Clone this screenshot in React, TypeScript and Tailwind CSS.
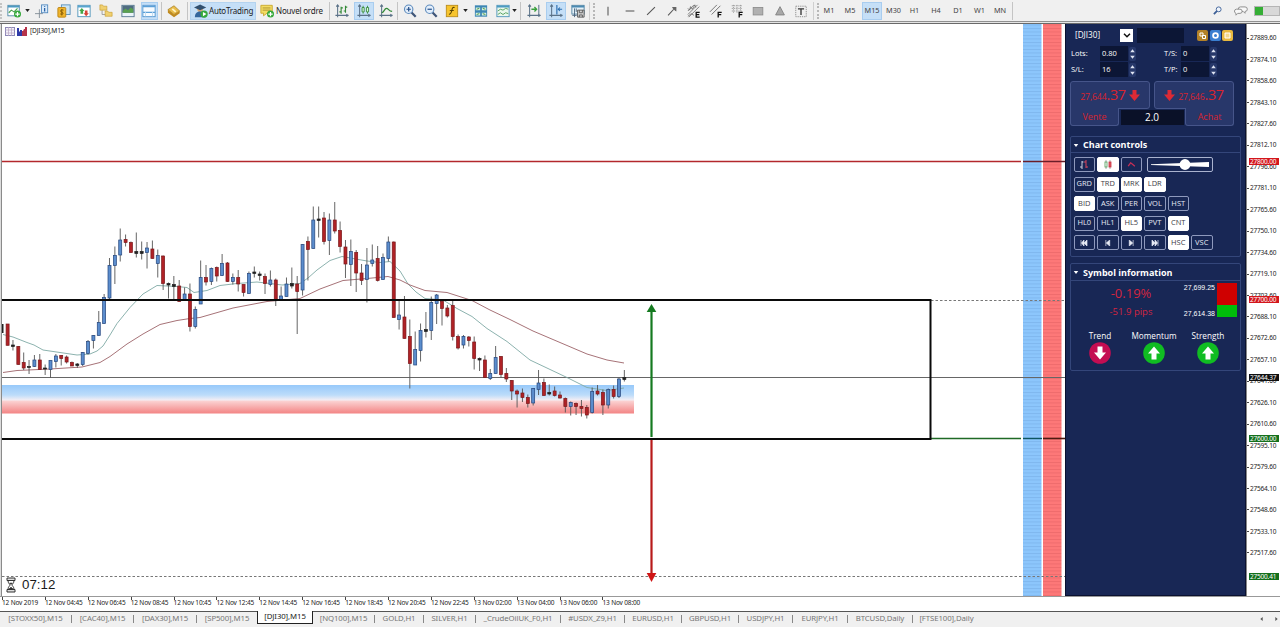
import type { ReactNode } from "react";
import clsx from "clsx";

type Kind = "b" | "r" | "d";
// high, body top, body bottom, low
type Candle = [Kind, number, number, number, number];

const candles: Candle[] = [
  ["r", 324, 324, 345.3, 345.3], ["d", 340, 345, 346.5, 350.5], ["r", 346, 346.5, 364.5, 364.5], ["r", 352.5, 362.5, 368, 370],
  ["d", 360, 366.5, 367.5, 374], ["b", 355, 360, 366.5, 367], ["r", 354, 360, 369.5, 369.5], ["d", 364.5, 368, 369, 375],
  ["b", 360.5, 360.5, 369.5, 378], ["b", 354, 356, 361.5, 367.5], ["r", 355, 355.5, 358.5, 365.5], ["r", 355.5, 357, 362, 363.5],
  ["r", 361.5, 362.5, 366, 366], ["d", 363, 364, 365.5, 368], ["b", 352, 352.5, 364.5, 366], ["b", 340, 341.5, 353.5, 354.5],
  ["b", 335, 335.5, 340.5, 348.5], ["b", 311, 322.5, 335.5, 335.5], ["b", 294, 297.5, 323.5, 323.5], ["b", 258, 265.5, 298, 299],
  ["b", 246.5, 255.5, 265.5, 284], ["b", 228.5, 240, 255, 261.5], ["r", 234.5, 239.5, 242.5, 246.5], ["r", 241.5, 242.5, 252.5, 252.5],
  ["d", 232.5, 251.5, 253.5, 257.5], ["d", 241.5, 251.5, 253.5, 259.5], ["b", 242, 248, 252.5, 268.5], ["r", 240.5, 249, 258.5, 258.5],
  ["b", 249.5, 255.5, 263.5, 277.5], ["r", 255.5, 256, 283.5, 290], ["d", 282.5, 283.5, 285, 298.5], ["d", 276, 284.5, 286.5, 300],
  ["r", 280, 286, 301.5, 301.5], ["b", 287.5, 294, 300.5, 300.5], ["r", 283.5, 294, 326.5, 331.5], ["b", 306.5, 309.5, 326.5, 328.5],
  ["b", 260.5, 277.5, 304, 304], ["r", 265, 277.5, 282, 285.5], ["b", 267.5, 268.5, 281.5, 285], ["r", 266.5, 267.5, 276, 281.5],
  ["b", 254, 263.5, 275.5, 276], ["r", 262, 263, 281.5, 282], ["b", 273.5, 277.5, 281.5, 284.5], ["r", 270, 277.5, 284, 291.5],
  ["r", 284.5, 284.5, 292.5, 296.5], ["b", 271.5, 273.5, 293.5, 293.5], ["d", 266.5, 272, 273.5, 277.5], ["d", 271.5, 274, 275.5, 280.5],
  ["r", 273.5, 276.5, 283.5, 294], ["b", 270.5, 280, 284.5, 286.5], ["r", 278.5, 280, 300.5, 306], ["b", 286.5, 296, 299.5, 300.5],
  ["b", 277.5, 284, 296.5, 296.5], ["d", 267.5, 283.5, 286, 288.5], ["r", 276, 284, 291.5, 334], ["b", 244, 244.5, 290, 295.5],
  ["r", 236.5, 241.5, 249.5, 280.5], ["b", 206.5, 220, 248.5, 248.5], ["d", 206.5, 219, 220.5, 237.5], ["r", 212, 218, 241.5, 244.5],
  ["b", 213.5, 220, 240.5, 255], ["r", 202, 220, 231, 233.5], ["r", 221.5, 230.5, 246.5, 252.5], ["r", 240, 247, 264, 278],
  ["b", 239.5, 251.5, 264.5, 286], ["r", 250, 252.5, 273, 292], ["r", 264, 273, 280.5, 285], ["b", 248, 265, 279.5, 302.5],
  ["b", 244.5, 260, 263.5, 266.5], ["r", 246, 258.5, 280.5, 281.5], ["b", 253.5, 257.5, 279.5, 279.5], ["b", 236.5, 242, 258.5, 261.5],
  ["r", 241.5, 242, 317.5, 317.5], ["b", 300.5, 315, 319.5, 329.5], ["r", 296, 317, 338.5, 338.5], ["r", 319.5, 336.5, 363.5, 388.5],
  ["b", 331.5, 349.5, 365, 365], ["b", 323.5, 330.5, 350.5, 361.5], ["d", 312, 329.5, 331.5, 337.5], ["b", 296.5, 302.5, 330.5, 340],
  ["b", 294, 295, 303.5, 324], ["r", 300, 301.5, 308.5, 325.5], ["r", 305, 308, 316, 317.5], ["r", 300, 305.5, 336.5, 340.5],
  ["r", 334.5, 336.5, 348, 349.5], ["b", 335, 336.5, 345, 348.5], ["r", 336, 337, 340.5, 346.5], ["r", 336.5, 342, 358.5, 369.5],
  ["d", 357.5, 358.5, 360, 371], ["r", 355.5, 360, 377.5, 378], ["b", 369, 373.5, 378.5, 380], ["b", 346, 357.5, 373.5, 373.5],
  ["r", 356, 356.5, 374.5, 377.5], ["r", 368, 373.5, 379, 382], ["r", 380, 380.5, 391, 400], ["r", 389.5, 391, 394, 407.5],
  ["r", 388.5, 393, 397.5, 402], ["r", 394.5, 397.5, 403.5, 407.5], ["b", 388, 388.5, 403, 405.5], ["b", 370, 383, 389.5, 395],
  ["r", 378.5, 382.5, 395.5, 395.5], ["d", 384.5, 392.5, 394, 395.5], ["r", 386.5, 391, 395.5, 396.5], ["r", 391.5, 395, 398, 398.5],
  ["r", 397.5, 398.5, 406.5, 412.5], ["b", 401.5, 402.5, 406.5, 415.5], ["r", 402.5, 403.5, 406.5, 415], ["r", 400, 406.5, 408.5, 416.5],
  ["r", 405, 407.5, 415, 418.5], ["b", 387.5, 391.5, 412.5, 413.5], ["r", 385, 391, 394, 395.5], ["r", 389.5, 392.5, 405, 415],
  ["b", 388.5, 389.5, 405, 408.5], ["r", 385.5, 389.5, 396.5, 398.5], ["b", 377.5, 379, 396.5, 398], ["d", 370, 377.5, 379.5, 381.5],
];

const fills: Record<Kind, string> = { b: "#5b8dcd", r: "#b02226", d: "#222" };
const strokes: Record<Kind, string> = { b: "#24457c", r: "#7a171b", d: "#222" };

const fastMa =
  "3,334.5 13,337 27,342.5 34,345 43,350 60,352.5 77,355 90,354 97,351 103,346 110,335 117,323.5 130,307.5 143,294 157,285.5 177,286.5 187,287.5 194,292.5 207,290.5 220,285.5 237,283.5 257,282 270,283.5 282,285 300,283.5 308,278 317,270 330,260.5 342,256.5 353,258.5 367,261 380,262.5 390,261.5 400,271 408,284 416,292 425,298.5 443,300 457,308.5 472,316.5 487,328.5 507,341.5 530,360 567,377.5 587,387.5 607,390.5 624,388";
const slowMa =
  "3,372.5 17,370.5 50,369 82,367 100,362.5 110,356.5 127,344 143,334 160,324.5 177,320.5 190,318.5 200,317.5 233,308 267,301.5 300,298.5 320,289 343,280.5 367,278.5 388,276.5 400,280 410,285 425,290.5 447,292.5 472,300.5 490,310 510,319.5 533,331 560,342.5 587,354 607,360 624,363";

const times = [
  "12 Nov 2019", "12 Nov 04:45", "12 Nov 06:45", "12 Nov 08:45", "12 Nov 10:45", "12 Nov 12:45", "12 Nov 14:45", "12 Nov 16:45",
  "12 Nov 18:45", "12 Nov 20:45", "12 Nov 22:45", "13 Nov 02:00", "13 Nov 04:00", "13 Nov 06:00", "13 Nov 08:00",
];

const prices = Array.from({ length: 25 }, (_, i) => (27889.6 - i * 15.5).toFixed(2));

const tabs = [
  { name: "[STOXX50],M15", w: "w-[72px]" },
  { name: "[CAC40],M15", w: "w-[62px]" },
  { name: "[DAX30],M15", w: "w-[63px]" },
  { name: "[SP500],M15", w: "w-[60px]", plain: true },
  { name: "[DJI30],M15", w: "w-[56px]", active: true },
  { name: "[NQ100],M15", w: "w-[62px]" },
  { name: "GOLD,H1", w: "w-[49px]" },
  { name: "SILVER,H1", w: "w-[52px]" },
  { name: "_CrudeOilUK_F0,H1", w: "w-[85px]" },
  { name: "#USDX_Z9,H1", w: "w-[64px]" },
  { name: "EURUSD,H1", w: "w-[57px]" },
  { name: "GBPUSD,H1", w: "w-[57px]" },
  { name: "USDJPY,H1", w: "w-[54px]" },
  { name: "EURJPY,H1", w: "w-[55px]" },
  { name: "BTCUSD,Daily", w: "w-[65px]" },
  { name: "[FTSE100],Daily", w: "w-[67px]", plain: true },
];

function Cell({ w, on, children }: { w: string; on?: string; children?: ReactNode }) {
  return (
    <div className={clsx("flex h-full shrink-0 items-center justify-center", w)}>
      {on ? <div className={clsx("flex h-[18px] items-center justify-center border border-[#a9cdef] bg-[#c5dff7]", on)}>{children}</div> : children}
    </div>
  );
}

function Icon({ children }: { children: ReactNode }) {
  return (
    <svg viewBox="0 0 16 16" className="size-[14px] shrink-0" fill="none">
      {children}
    </svg>
  );
}

const Caret = () => (
  <svg viewBox="0 0 6 4" className="h-[3px] w-[5px]"><path d="M0 0h6L3 4z" fill="#222" /></svg>
);
const Sep = ({ w }: { w: string }) => (
  <Cell w={w}><div className="h-[18px] w-px bg-[#c4c4c4]" /></Cell>
);
const Grip = ({ w }: { w: string }) => (
  <Cell w={w}>
    <div className="flex gap-[3px]">
      <div className="h-[18px] w-px bg-[#cfcfcf]" />
      <div className="h-[16px] self-center border-l-2 border-dotted border-[#b8b8b8]" />
    </div>
  </Cell>
);
const Axes = () => <path d="M3 1v14M0.500 13h15M13 11.500l2 1.500-2 1.500M1.500 3L3 1l1.500 2" stroke="#5b7288" strokeWidth="1.200" />;
const Plus = () => (
  <g>
    <circle cx="12" cy="11.500" r="4" fill="#35a83a" />
    <path d="M12 9v5M9.500 11.500h5" stroke="#fff" strokeWidth="1.400" />
  </g>
);

function Magnifier({ minus }: { minus?: boolean }) {
  return (
    <Icon>
      <path d="M9.500 9.500l5 5" stroke="#3f5577" strokeWidth="2.600" />
      <circle cx="6.500" cy="6" r="4.800" fill="#e4effb" stroke="#5d8bbd" strokeWidth="1.300" />
      <path d={minus ? "M4 6h5" : "M4 6h5M6.500 3.500v5"} stroke="#27518c" strokeWidth="1.400" />
    </Icon>
  );
}

function Toolbar() {
  return (
    <div className="flex h-[21px] items-center bg-[#f0f0f0] font-['Noto_Sans',sans-serif] text-[#222]">
      <div className="h-[16px] w-[3px] border-l-2 border-dotted border-[#c4c4c4]" />
      <Cell w="w-[21px]">
        <Icon>
          <rect x="1" y="1.500" width="13" height="12" fill="#fff" stroke="#4b86a8" />
          <path d="M1 3h13" stroke="#4b9ac2" strokeWidth="2" />
          <path d="M2 10l3-3 3 2 4-4" stroke="#48a04b" strokeWidth="1.300" />
          <Plus />
        </Icon>
      </Cell>
      <Cell w="w-[6px]"><Caret /></Cell>
      <Cell w="w-[24px]">
        <Icon>
          <path d="M0 11h9M5 6v10" stroke="#7e8994" />
          <rect x="7.500" y="1" width="7" height="9" fill="#dcecfb" stroke="#4d86bd" />
          <path d="M11 4.500v4M11 2.500v1" stroke="#2b62a5" strokeWidth="1.500" />
        </Icon>
      </Cell>
      <Cell w="w-[19px]">
        <Icon>
          <rect x="5" y="1" width="10" height="11" fill="#cbe4f5" stroke="#538db5" />
          <rect x="1" y="4" width="9" height="11" rx="1" fill="#f0b52c" stroke="#b8800f" />
          <path d="M7.500 7c-4-1.500-4 2-2 2.400s2.500 3-1.800 2M5.500 5.800v7.400" stroke="#7b5200" />
        </Icon>
      </Cell>
      <Cell w="w-[22px]">
        <Icon>
          <rect x="1" y="1.500" width="14" height="13" fill="#fff" stroke="#4a91b9" />
          <path d="M1 3h14" stroke="#58a6d0" strokeWidth="2" />
          <path d="M5.500 4.500l3 3.500H7v3H4V8H2.500z" fill="#43a646" />
          <path d="M10.500 14L7.500 10.500H9v-3h3v3h1.500z" fill="#d64537" />
        </Icon>
      </Cell>
      <Cell w="w-[22px]">
        <Icon>
          <path d="M3.500 5v7H9" stroke="#999" />
          <path d="M1 1h3l1 1.500h4V7H1zM7 8h3l1 1.500h4V14H7z" fill="#f0d070" stroke="#c79a29" strokeWidth=".7" />
        </Icon>
      </Cell>
      <Cell w="w-[21px]">
        <Icon>
          <rect x="1" y="1.500" width="14" height="13" fill="#eaf3f9" stroke="#53758f" />
          <path d="M1.500 2h13v8h-13z" fill="#4f6c80" />
          <path d="M2 8l3-3 3 2 3-3 3 2v4H2z" fill="#5aa04f" />
        </Icon>
      </Cell>
      <Cell w="w-[22px]" on="w-[17px]">
        <Icon>
          <rect x="1" y="1.500" width="14" height="13" fill="#f7fbff" stroke="#4f93cd" />
          <path d="M1 3h14M1 9.500h14" stroke="#5ba0d8" strokeWidth="1.300" />
          <path d="M4 9v5M12 9v5" stroke="#bcd9f0" />
        </Icon>
      </Cell>
      <Sep w="w-[3px]" />
      <Cell w="w-[22px]">
        <Icon>
          <path d="M1 6.500L8 2l6.500 6L8 12z" fill="#e9bd4a" stroke="#a4781b" strokeWidth=".8" />
          <path d="M1 6.500V10l7 5 6.500-4.500V8L8 12z" fill="#c08a1d" />
          <path d="M6 5.500l4 3.500" stroke="#fff3c5" strokeWidth="2" />
        </Icon>
      </Cell>
      <Sep w="w-[5px]" />
      <div className="flex h-[18px] w-[66px] shrink-0 items-center gap-px border border-[#b4d3ef] bg-[#c5dff7] pl-[3px]">
        <Icon>
          <circle cx="7" cy="6" r="3.200" fill="#d9a874" />
          <path d="M0 4l7-3.500L14 4 7 7z" fill="#31506f" />
          <path d="M1 15c0-5 3-6.500 6-6.500s6 1.500 6 6.500z" fill="#35679d" />
          <circle cx="11.500" cy="11.500" r="4.200" fill="#36a83b" />
          <path d="M10.200 9l4 2.500-4 2.500z" fill="#fff" />
        </Icon>
        <span className="text-[8px] tracking-[-0.2px] whitespace-nowrap">AutoTrading</span>
      </div>
      <div className="flex w-[69px] shrink-0 items-center gap-[2px] pl-[4px]">
        <Icon>
          <path d="M1 1.500h13v9H8l-4 3v-3H1z" fill="#f3dc62" stroke="#c7a62b" />
          <path d="M3 4.500h9M3 7h9" stroke="#a78d2a" />
          <Plus />
        </Icon>
        <span className="text-[8px] tracking-[-0.2px] whitespace-nowrap">Nouvel ordre</span>
      </div>
      <Sep w="w-[8px]" />
      <Cell w="w-[18px]">
        <Icon><Axes /><path d="M7 3v8M5 9h2M7 4.500h2M12 2v8M10 8h2M12 3.500h2" stroke="#338a38" strokeWidth="1.300" /></Icon>
      </Cell>
      <Cell w="w-[26px]" on="w-[20px]">
        <Icon><Axes /><path d="M7 2v9M12 2v9" stroke="#338a38" /><path d="M5.800 4h2.400v5H5.800zM10.800 4h2.400v5h-2.400z" fill="#dff5da" stroke="#338a38" /></Icon>
      </Cell>
      <Cell w="w-[17px]">
        <Icon><Axes /><path d="M3 10c3 0 3-5 5.500-5S11 8 15 8.500" stroke="#338a38" strokeWidth="1.400" /></Icon>
      </Cell>
      <Sep w="w-[6px]" />
      <Cell w="w-[20px]"><Magnifier /></Cell>
      <Cell w="w-[22px]"><Magnifier minus /></Cell>
      <Cell w="w-[20px]">
        <Icon>
          <rect x="1.500" y="1.500" width="13" height="13" fill="#f7c42d" stroke="#b88a1a" />
          <path d="M11 4c-2-.5-2.500 0-3 2.500S7 12 4.500 11.800M5.500 7.500h4.500" stroke="#5a4300" strokeWidth="1.200" />
        </Icon>
      </Cell>
      <Cell w="w-[6px]"><Caret /></Cell>
      <Cell w="w-[26px]">
        <Icon>
          <rect x="1" y="1.500" width="14" height="13" fill="#3c86b4" />
          <path d="M2 4h5v3H2zM9 4h5v3H9zM2 10h5v3H2zM9 10h5v3H9z" fill="#d8f0e0" />
          <path d="M3 6l3-1M10 5l3 1M3 12l3-1M10 11l3 1" stroke="#338a38" />
        </Icon>
      </Cell>
      <Cell w="w-[17px]">
        <Icon>
          <rect x="1" y="1.500" width="14" height="13" fill="#eaf7ec" stroke="#4a91b9" />
          <path d="M1 3h14" stroke="#4b9ac2" strokeWidth="2" />
          <path d="M2 8l3-2 3 1 3-2 3 1M2 12l3-2 3 2 3-2 3 1" stroke="#4a9c56" />
        </Icon>
      </Cell>
      <Cell w="w-[6px]"><Caret /></Cell>
      <Sep w="w-[7px]" />
      <Cell w="w-[20px]">
        <Icon><Axes /><path d="M13.500 1v11" stroke="#47617a" /><path d="M5 6h6M8.500 3.500L11 6 8.500 8.500" stroke="#38a03c" strokeWidth="1.500" /></Icon>
      </Cell>
      <Cell w="w-[24px]" on="w-[20px]">
        <Icon><Axes /><path d="M9 1v11" stroke="#2a6db0" strokeWidth="1.300" /><path d="M10.500 6H15M12.500 4l-2 2 2 2" stroke="#2a6db0" strokeWidth="1.200" /></Icon>
      </Cell>
      <Cell w="w-[19px]">
        <Icon>
          <rect x="1" y="1.500" width="14" height="10" fill="#e5f1f8" stroke="#4a7f9f" />
          <path d="M1 3h14" stroke="#4b8ab2" strokeWidth="2" />
          <path d="M4 5v10M1.500 13h5M6 5v4" stroke="#47617a" />
          <path d="M7.500 7h7.500v8H7.500z" fill="#d5d5d5" stroke="#555" />
          <path d="M9.500 7v3h3.500V7M9.500 15v-2.500H13V15" stroke="#555" />
        </Icon>
      </Cell>
      <Grip w="w-[10px]" />
      <Cell w="w-[22px]"><Icon><path d="M8 3v10" stroke="#555" strokeWidth="1.200" /></Icon></Cell>
      <Cell w="w-[21px]"><Icon><path d="M3 8h10" stroke="#555" strokeWidth="1.200" /></Icon></Cell>
      <Cell w="w-[22px]"><Icon><path d="M3.500 12.500l9-9" stroke="#555" strokeWidth="1.200" /></Icon></Cell>
      <Cell w="w-[20px]"><Icon><path d="M3.500 13L10 6" stroke="#555" strokeWidth="1.200" /><path d="M8 3.500h5v5l-2-1.500-2-2z" fill="#666" /></Icon></Cell>
      <Cell w="w-[24px]">
        <Icon>
          <path d="M1 8l7-7M1 12L12 1M2 15L14 3M1 5l2 2 1-4 2 3 3-5 1 3M1 14l4-3 3 2" stroke="#666" strokeWidth=".9" />
          <path d="M14.500 9.500h-4v5.500h4M10.500 12.200h3.500" stroke="#111" strokeWidth="1.500" />
        </Icon>
      </Cell>
      <Cell w="w-[20px]">
        <Icon>
          <path d="M1 9l8-8M3 12L13 2" stroke="#666" />
          <path d="M14.500 9.500h-4V15.500M10.500 12.200h3.500" stroke="#111" strokeWidth="1.500" />
        </Icon>
      </Cell>
      <Cell w="w-[21px]">
        <Icon>
          <path d="M2 2h12M2 5h12M2 8h12M4 1v9M8 1v9M12 1v7" stroke="#999" strokeDasharray="1.500 1" />
          <path d="M14.500 9.500h-4V15.500M10.500 12.200h3.500" stroke="#111" strokeWidth="1.500" />
        </Icon>
      </Cell>
      <Cell w="w-[22px]"><Icon><rect x="2.500" y="4" width="11" height="8.500" fill="#b0b0b0" stroke="#8c8c8c" /></Icon></Cell>
      <Cell w="w-[21px]"><Icon><path d="M8 3l5 9.500H3z" fill="#a8a8a8" stroke="#808080" /></Icon></Cell>
      <Cell w="w-[22px]">
        <Icon>
          <rect x="2" y="2.500" width="12" height="12" stroke="#888" strokeDasharray="1.500 1" />
          <path d="M4.500 5.500h7M8 5.500v7" stroke="#333" strokeWidth="1.500" />
        </Icon>
      </Cell>
      <Grip w="w-[7px]" />
      <div className="flex h-full items-center text-[7.3px] text-[#444]">
        <Cell w="w-[20px]">M1</Cell>
        <Cell w="w-[22px]">M5</Cell>
        <Cell w="w-[22px]" on="w-[20px]">M15</Cell>
        <Cell w="w-[21px]">M30</Cell>
        <Cell w="w-[21px]">H1</Cell>
        <Cell w="w-[22px]">H4</Cell>
        <Cell w="w-[22px]">D1</Cell>
        <Cell w="w-[21px]">W1</Cell>
        <Cell w="w-[20px]">MN</Cell>
      </div>
      <Sep w="w-[4px]" />
      <div className="flex-1" />
      <Cell w="w-[20px]">
        <svg viewBox="0 0 10 10" className="size-[9px]" fill="none">
          <path d="M1 9l3.500-3.500" stroke="#3c5f96" strokeWidth="2" />
          <circle cx="6.300" cy="3.700" r="2.700" fill="#eef4fb" stroke="#3c5f96" />
        </svg>
      </Cell>
      <Cell w="w-[27px]">
        <svg viewBox="0 0 16 11" className="h-[10px] w-[15px]" fill="#f8f8f8" stroke="#888">
          <path d="M8 1h5a2.500 2.500 0 010 5v2l-2-2H8a2.500 2.500 0 010-5z" />
          <path d="M3.500 3.500h4a2.300 2.300 0 010 4.600H5l-2 2V8a2.300 2.300 0 01.5-4.500z" />
        </svg>
      </Cell>
      <div className="flex h-[10px] w-[26px] border border-[#b5b5b5] bg-[#d8d8d8]">
        <div className="w-[8px] bg-[#35ae35]" />
      </div>
    </div>
  );
}

function Chart() {
  return (
    <div className="relative h-[572px] w-[1063px] bg-white">
      <svg viewBox="2 24 1063 572" className="block h-[572px] w-[1063px]">
        <defs>
          <linearGradient id="zone" x1="0" y1="0" x2="0" y2="1">
            <stop offset="0" stopColor="#97c9fa" />
            <stop offset=".35" stopColor="#bcdcfa" />
            <stop offset=".53" stopColor="#f3eef4" />
            <stop offset=".56" stopColor="#fbd2d2" />
            <stop offset="1" stopColor="#f38484" />
          </linearGradient>
          <pattern id="blueStripes" width="4" height="3.500" patternUnits="userSpaceOnUse">
            <rect width="4" height="4" fill="#8cc6fc" />
            <rect width="4" height=".9" fill="#7fb7ee" />
          </pattern>
          <pattern id="redStripes" width="4" height="3.500" patternUnits="userSpaceOnUse">
            <rect width="4" height="4" fill="#fd7878" />
            <rect width="4" height=".9" fill="#ee6b6c" />
          </pattern>
        </defs>
        <rect x="2" y="385" width="632" height="28.500" fill="url(#zone)" />
        <rect x="1023" y="24" width="18.500" height="572" fill="url(#blueStripes)" />
        <rect x="1043" y="24" width="18.500" height="572" fill="url(#redStripes)" />
        <path d="M2 377.500H1065" stroke="#666" />
        <path d="M2 161.500H1021" stroke="#b3282c" strokeWidth="1.400" />
        <path d="M1023 161.500H1065" stroke="#6b1d28" strokeWidth="1.400" />
        <path d="M930 438.500H1021" stroke="#1f6a25" strokeWidth="1.600" />
        <path d="M1023 438.500H1042" stroke="#0d5560" strokeWidth="1.400" />
        <path d="M1043 438.500H1065" stroke="#4c1a10" strokeWidth="1.600" />
        <path d="M931 300.500H1065M2 576.500H1065" stroke="#777" strokeDasharray="2.500 2" />
        <polyline points={fastMa} fill="none" stroke="#7fa9a5" strokeWidth=".9" />
        <polyline points={slowMa} fill="none" stroke="#9c6268" strokeWidth=".9" />
        <rect x="2" y="324" width="1.500" height="9" fill="#222" />
        {candles.map(([kind, high, top, bottom, low], i) => {
          const x = 7.6 + i * 5.363;
          return (
            <g key={i}>
              <path d={`M${x} ${high}V${low}`} stroke="#555" strokeWidth=".9" />
              <rect x={x - 1.5} y={top} width="3" height={Math.max(bottom - top, 1)} fill={fills[kind]} stroke={strokes[kind]} strokeWidth=".7" />
            </g>
          );
        })}
        <path d="M2 300H930.500V439H2" fill="none" stroke="#0a0a0a" strokeWidth="2" />
        <path d="M651.500 311V437" stroke="#157a20" strokeWidth="2.200" />
        <path d="M651.500 304l4.800 8h-9.600z" fill="#157a20" />
        <path d="M651.500 440V574" stroke="#b81a1a" strokeWidth="2.200" />
        <path d="M651.500 582l4.800-9h-9.600z" fill="#cf1515" />
      </svg>
      <div className="absolute top-[2px] left-[3px] flex items-center gap-[2px]">
        <svg viewBox="0 0 10 9" className="h-[9px] w-[10px]" fill="none">
          <rect x=".5" y=".5" width="9" height="8" fill="#f3f1fa" stroke="#8d88b8" />
          <path d="M0 3h10M0 6h10M3.500 0v9M6.500 0v9" stroke="#b9a5c0" strokeWidth=".7" />
        </svg>
        <svg viewBox="0 0 10 9" className="h-[9px] w-[10px]">
          <path d="M0 1h2v3l1 1V3h2v6H0z" fill="#2f3aa8" />
          <path d="M5 4h1l1-2h1V0h2v9H5z" fill="#b5334a" />
        </svg>
        <span className="pl-px font-['Noto_Sans',sans-serif] text-[6.6px] leading-[10px] tracking-[-0.15px] text-[#222]">[DJI30],M15</span>
      </div>
      <div className="absolute bottom-[1px] left-[4px] flex items-center gap-[6px]">
        <svg viewBox="0 0 10 16" className="h-[16px] w-[10px]" fill="none" stroke="#333">
          <path d="M1 1h8v2.500H1zM1 12.500h8V15H1z" fill="#ddd" />
          <path d="M2 3.500c0 3 2 3.500 2 4.500s-2 1.500-2 4.500M8 3.500c0 3-2 3.500-2 4.500s2 1.500 2 4.500" />
          <path d="M3 12l2-2 2 2zM3.500 6h3L5 7.500z" fill="#333" strokeWidth=".5" />
        </svg>
        <span className="font-['Liberation_Sans',sans-serif] text-[13.3px] leading-[20px] text-[#1a1a1a]">07:12</span>
      </div>
    </div>
  );
}

function Spinner() {
  return (
    <svg viewBox="0 0 7 14" className="h-[14px] w-[7px]">
      <rect width="7" height="14" rx="2" fill="#27386a" />
      <path d="M1.200 5.300h4.600L3.500 2.300zM1.200 8.700h4.600L3.500 11.700z" fill="#dfe4f2" />
    </svg>
  );
}

function Field({ label, value, lw }: { label: string; value: string; lw: string }) {
  return (
    <div className="flex items-center">
      <span className={clsx("whitespace-nowrap", lw)}>{label}</span>
      <div className="mr-px flex h-[15px] w-[28px] items-center bg-[#0c1635] pl-[2px]">{value}</div>
      <Spinner />
    </div>
  );
}

function DownArrow() {
  return (
    <svg viewBox="0 0 11 11" className="size-[11px]"><path d="M3.500 0h4v4.500H11L5.500 11 0 4.500h3.500z" fill="#dd2a35" /></svg>
  );
}

function PriceButtons() {
  return (
    <div className="mt-[4px] ml-[4px] w-[164px] text-[#d8242f]">
      <div className="flex gap-[4px]">
        <div className="flex h-[28px] w-[80px] items-center justify-center gap-[3px] rounded-t-[3px] rounded-br-[3px] border border-[#46558a] bg-[#28376a]">
          <span className="flex items-baseline whitespace-nowrap"><span className="text-[8.8px] tracking-[-0.2px]">27,644</span><span className="text-[14.5px] tracking-[-0.4px]">.37</span></span>
          <DownArrow />
        </div>
        <div className="flex h-[28px] w-[80px] items-center justify-center gap-[3px] rounded-t-[3px] rounded-bl-[3px] border border-[#46558a] bg-[#28376a]">
          <DownArrow />
          <span className="flex items-baseline whitespace-nowrap"><span className="text-[8.8px] tracking-[-0.2px]">27,646</span><span className="text-[14.5px] tracking-[-0.4px]">.37</span></span>
        </div>
      </div>
      <div className="-mt-px flex items-end justify-between">
        <div className="flex h-[18px] w-[49px] items-center justify-center rounded-b-[3px] border border-t-0 border-[#46558a] bg-[#28376a] text-[9px]">Vente</div>
        <div className="mb-px flex h-[15px] w-[63px] items-center justify-center bg-[#0a1128] text-[10px] text-white">2.0</div>
        <div className="flex h-[18px] w-[49px] items-center justify-center rounded-b-[3px] border border-t-0 border-[#46558a] bg-[#28376a] text-[9px]">Achat</div>
      </div>
    </div>
  );
}

function Key({ on, children }: { on?: boolean; children: ReactNode }) {
  return (
    <div
      className={clsx(
        "flex h-[15px] w-[21.5px] items-center justify-center rounded-[2px] border text-[7.5px]",
        on ? "border-white bg-white text-[#3c3c46]" : "border-[#8e99bd] text-[#e6e9f4]",
      )}
    >
      {children}
    </div>
  );
}

const keyRows = [
  ["GRD", "TRD*", "MRK*", "LDR*"],
  ["BID*", "ASK", "PER", "VOL", "HST"],
  ["HL0", "HL1", "HL5*", "PVT", "CNT*"],
];

const seeks = ["M1 0v7M8 0L4.500 3.500 8 7zM4.500 0L1.500 3.500 4.500 7z", "M2 0v7M6.500 0L2.500 3.500 6.500 7z", "M7 0v7M2.500 0l4 3.500-4 3.500z", "M8 0v7M1 0l3.500 3.500L1 7zM4.500 0l3 3.500-3 3.500z"];

function Heading({ children }: { children: string }) {
  return (
    <div className="flex items-center gap-[4px] border-b border-[#34467a] pt-px pl-[2px] text-[9px] font-bold">
      <svg viewBox="0 0 6 4" className="h-[3px] w-[6px]"><path d="M0 0h6L3 4z" fill="#fff" /></svg>
      {children}
    </div>
  );
}

function ChartControls() {
  return (
    <div className="mt-[10px] ml-[4px] h-[121px] w-[171px] rounded-[2px] border border-[#34467a]">
      <div className="grid grid-rows-[16px]"><Heading>Chart controls</Heading></div>
      <div className="flex flex-col gap-[4.5px] pt-[4px] pl-[2.5px]">
        <div className="flex gap-[2px]">
          <Key><svg viewBox="0 0 10 9" className="h-[9px] w-[10px]" fill="none"><path d="M3 1v8M1 7h2M3 2h1.500" stroke="#c9cfe0" /><path d="M7 0v8M5 2h2M7 7h2" stroke="#d6455c" /></svg></Key>
          <Key on><svg viewBox="0 0 10 9" className="h-[9px] w-[10px]" fill="none"><path d="M3 0v9M7 0v9" stroke="#999" strokeWidth=".8" /><rect x="2" y="2" width="2" height="5" fill="#fff" stroke="#4c9c57" strokeWidth=".8" /><rect x="6" y="2" width="2" height="5" fill="#e45a66" stroke="#c42f40" strokeWidth=".8" /></svg></Key>
          <Key><svg viewBox="0 0 10 6" className="h-[5px] w-[9px]" fill="none"><path d="M1 5l3-4 1.500 1L9 5" stroke="#c72f56" strokeWidth="1.500" /></svg></Key>
          <div className="ml-[3px] flex h-[15px] w-[66px] items-center justify-center rounded-[2px] border border-[#aab3cf]">
            <svg viewBox="0 0 60 11" className="h-[11px] w-[60px]"><path d="M1 5.300L59 3v5L1 6z" fill="#fff" /><circle cx="35" cy="5.500" r="5.400" fill="#fff" /></svg>
          </div>
        </div>
        {keyRows.map((row) => (
          <div key={row[0]} className="flex gap-[2px]">
            {row.map((k) => <Key key={k} on={k.endsWith("*")}>{k.replace("*", "")}</Key>)}
          </div>
        ))}
        <div className="flex gap-[2px]">
          {seeks.map((d) => (
            <Key key={d}><svg viewBox="0 0 9 7" className="h-[6px] w-[8px]"><path d={d} fill="#e8ebf5" stroke="#e8ebf5" strokeWidth=".8" /></svg></Key>
          ))}
          <Key on>HSC</Key>
          <Key>VSC</Key>
        </div>
      </div>
    </div>
  );
}

function Gauge({ label, down }: { label: string; down?: boolean }) {
  return (
    <div className="flex w-[54px] flex-col items-center gap-px">
      <span className="leading-[11px]">{label}</span>
      <svg viewBox="0 0 22 22" className="size-[22px]">
        <circle cx="11" cy="11" r="10.800" fill={down ? "#c40d52" : "#10bd22"} />
        <path d={down ? "M8.500 4.500h5v6H17L11 17.500 5 10.500h3.500z" : "M8.500 17.500h5v-6H17L11 4.500 5 11.500h3.500z"} fill="#fff" />
      </svg>
    </div>
  );
}

function SymbolInfo() {
  return (
    <div className="mt-[6px] ml-[4px] h-[108px] w-[171px] rounded-[2px] border border-[#34467a]">
      <div className="grid grid-rows-[17px]"><Heading>Symbol information</Heading></div>
      <div className="flex h-[40px] justify-end pt-[2px] pr-[3px]">
        <div className="mr-[3px] flex w-[66px] flex-col items-center text-[#d32540]">
          <span className="pt-px text-[13px] leading-[19px]">-0.19%</span>
          <span className="text-[9.5px] leading-[17px] whitespace-nowrap">-51.9 pips</span>
        </div>
        <div className="flex h-[35px] w-[50px] flex-col items-end justify-between pr-[2px] font-['Liberation_Sans',sans-serif] text-[7px] leading-[9px]">
          <span>27,699.25</span>
          <span>27,614.38</span>
        </div>
        <div className="flex h-[34px] w-[20px] flex-col">
          <div className="h-[22px] bg-[#cf0000]" />
          <div className="h-[12px] bg-[#00bd0a]" />
        </div>
      </div>
      <div className="flex pt-[9px] pl-[2px] text-[8.2px]">
        <Gauge label="Trend" down />
        <Gauge label="Momentum" />
        <Gauge label="Strength" />
      </div>
    </div>
  );
}

function SidePanel() {
  return (
    <div className="h-[572px] w-[181px] border-x border-b border-[#0a1130] bg-[#182755] pt-[3px] font-['Open_Sans',sans-serif] text-white">
      <div className="flex h-[16px] items-center pl-[9px] text-[8.2px]">
        <span className="w-[45px]">[DJI30]</span>
        <div className="flex size-[13px] items-center justify-center bg-white">
          <svg viewBox="0 0 8 5" className="h-[5px] w-[8px]" fill="none"><path d="M1 .8l3 3 3-3" stroke="#111" strokeWidth="1.500" /></svg>
        </div>
        <div className="ml-[4px] h-[15px] w-[47px] bg-[#0c1635]" />
        <div className="ml-[13px] flex gap-[1.5px]">
          <svg viewBox="0 0 11 11" className="size-[11px]" fill="none"><rect width="11" height="11" rx="2" fill="#b38127" /><path d="M3 3h3v3H3zM5.500 5.500h3v3h-3z" stroke="#fff" /></svg>
          <svg viewBox="0 0 11 11" className="size-[11px]" fill="none"><rect width="11" height="11" rx="2" fill="#3a7fd0" /><circle cx="5.500" cy="5.500" r="2.400" stroke="#fff" strokeWidth="1.800" /></svg>
          <svg viewBox="0 0 11 11" className="size-[11px]" fill="none"><rect width="11" height="11" rx="2" fill="#e8b93f" /><path d="M3 3h5v5H3z" stroke="#fff" fill="#f4d98c" /></svg>
        </div>
      </div>
      <div className="mt-[3px] flex flex-col gap-px pl-[5px] text-[7.5px]">
        <div className="flex gap-[28px]">
          <Field label="Lots:" value="0.80" lw="w-[29px]" />
          <Field label="T/S:" value="0" lw="w-[17px]" />
        </div>
        <div className="flex gap-[28px]">
          <Field label="S/L:" value="16" lw="w-[29px]" />
          <Field label="T/P:" value="0" lw="w-[17px]" />
        </div>
      </div>
      <PriceButtons />
      <ChartControls />
      <SymbolInfo />
    </div>
  );
}

function Tag({ at, bg, children }: { at: string; bg: string; children: string }) {
  return <div className={clsx("absolute left-[2px] flex h-[7px] w-[30px] items-center pl-px text-white", at, bg)}>{children}</div>;
}

function PriceAxis() {
  return (
    <div className="relative h-[572px] flex-1 border-l border-[#888] bg-white pt-[3.3px] font-['Noto_Sans',sans-serif] text-[6.5px] tracking-[-0.2px] text-[#222]">
      {prices.map((p) => (
        <div key={p} className="flex h-[21.46px] items-center">
          <div className="mr-px h-px w-[2px] bg-[#444]" />
          {p}
        </div>
      ))}
      <Tag at="top-[134px]" bg="bg-[#d3161c]">27800.00</Tag>
      <Tag at="top-[272px]" bg="bg-[#d3161c]">27700.00</Tag>
      <Tag at="top-[350px]" bg="bg-[#111]">27644.37</Tag>
      <Tag at="top-[411px]" bg="bg-[#14701c]">27600.00</Tag>
      <Tag at="top-[549px]" bg="bg-[#14701c]">27500.41</Tag>
    </div>
  );
}

function TimeAxis() {
  return (
    <div className="flex h-[15px] border-t border-[#999] bg-white pl-[2px] font-['Noto_Sans',sans-serif] text-[6.5px] tracking-[-0.15px] text-[#222]">
      {times.map((t) => (
        <div key={t} className="flex w-[42.9px] shrink-0 items-center pb-[3px] whitespace-nowrap">
          <div className="-mr-px h-[3px] w-px self-start bg-[#444]" />
          {t}
        </div>
      ))}
    </div>
  );
}

function Tabs() {
  return (
    <div className="flex h-[16px] items-start border-t border-[#555] bg-[#f0f0f0] font-['Noto_Sans',sans-serif] text-[7.8px] tracking-[-0.1px] text-[#777]">
      {tabs.map((t) => (
        <div
          key={t.name}
          className={clsx(
            "flex h-[13px] shrink-0 items-center justify-center whitespace-nowrap",
            t.w,
            t.active && "-mt-px border border-t-0 border-[#222] bg-white text-[#222]",
          )}
        >
          <span className="flex-1 text-center">{t.name}</span>
          {!t.active && !t.plain && <div className="h-[8px] w-px bg-[#888]" />}
        </div>
      ))}
      <div className="ml-auto flex h-[13px] items-center gap-[12px] pr-[2px]">
        <svg viewBox="0 0 3 5" className="h-[4px] w-[3px]"><path d="M3 0v5L0 2.500z" fill="#555" /></svg>
        <svg viewBox="0 0 3 5" className="h-[4px] w-[3px]"><path d="M0 0v5l3-2.500z" fill="#555" /></svg>
      </div>
    </div>
  );
}

export default function App() {
  return (
    <div className="flex h-[627px] w-[1280px] flex-col overflow-hidden bg-[#f0f0f0]">
      <Toolbar />
      <div className="h-[3px] border-y border-t-[#909090] border-b-[#6a6a6a] bg-[#e4e4e4]" />
      <div className="flex h-[572px]">
        <div className="w-[2px] border-r border-[#8a8a8a] bg-[#dcdcdc]" />
        <Chart />
        <SidePanel />
        <PriceAxis />
      </div>
      <TimeAxis />
      <Tabs />
    </div>
  );
}
